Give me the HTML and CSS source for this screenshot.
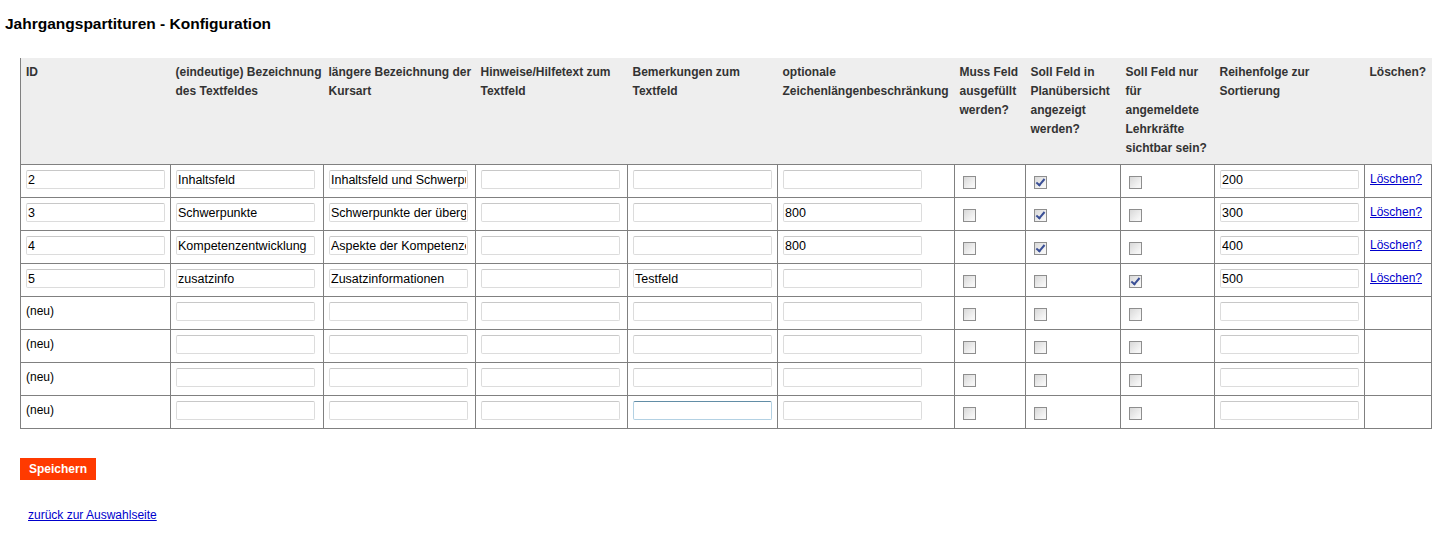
FILE: index.html
```html
<!DOCTYPE html>
<html lang="de">
<head>
    <meta charset="UTF-8">
    <title>Jahrgangspartituren - Konfiguration</title>
    <link rel="stylesheet" href="styles.css">
</head>
<body>

    <h1 class="page-title">Jahrgangspartituren - Konfiguration</h1>

    <!-- Konfiguration der Textfelder -->
    <form class="config" onsubmit="return false">
        <table class="fields">
            <colgroup>
                <col class="c-id">
                <col class="c-name">
                <col class="c-long">
                <col class="c-hint">
                <col class="c-note">
                <col class="c-len">
                <col class="c-must">
                <col class="c-plan">
                <col class="c-auth">
                <col class="c-order">
                <col class="c-del">
            </colgroup>
            <thead>
                <tr>
                    <th>ID</th>
                    <th>(eindeutige) Bezeichnung des Textfeldes</th>
                    <th>längere Bezeichnung der Kursart</th>
                    <th>Hinweise/Hilfetext zum Textfeld</th>
                    <th>Bemerkungen zum Textfeld</th>
                    <th>optionale Zeichenlängenbeschränkung</th>
                    <th>Muss Feld ausgefüllt werden?</th>
                    <th>Soll Feld in Planübersicht angezeigt werden?</th>
                    <th>Soll Feld nur für angemeldete Lehrkräfte sichtbar sein?</th>
                    <th>Reihenfolge zur Sortierung</th>
                    <th>Löschen?</th>
                </tr>
            </thead>
            <tbody>
                <tr>
                    <td><input type="text" value="2"></td>
                    <td><input type="text" value="Inhaltsfeld"></td>
                    <td><input type="text" value="Inhaltsfeld und Schwerpunkte"></td>
                    <td><input type="text"></td>
                    <td><input type="text"></td>
                    <td><input type="text"></td>
                    <td><input type="checkbox"></td>
                    <td><input type="checkbox" checked></td>
                    <td><input type="checkbox"></td>
                    <td><input type="text" value="200"></td>
                    <td><a href="#">Löschen?</a></td>
                </tr>
                <tr>
                    <td><input type="text" value="3"></td>
                    <td><input type="text" value="Schwerpunkte"></td>
                    <td><input type="text" value="Schwerpunkte der übergeordneten Kompetenzerwartungen"></td>
                    <td><input type="text"></td>
                    <td><input type="text"></td>
                    <td><input type="text" value="800"></td>
                    <td><input type="checkbox"></td>
                    <td><input type="checkbox" checked></td>
                    <td><input type="checkbox"></td>
                    <td><input type="text" value="300"></td>
                    <td><a href="#">Löschen?</a></td>
                </tr>
                <tr>
                    <td><input type="text" value="4"></td>
                    <td><input type="text" value="Kompetenzentwicklung"></td>
                    <td><input type="text" value="Aspekte der Kompetenzentwicklung"></td>
                    <td><input type="text"></td>
                    <td><input type="text"></td>
                    <td><input type="text" value="800"></td>
                    <td><input type="checkbox"></td>
                    <td><input type="checkbox" checked></td>
                    <td><input type="checkbox"></td>
                    <td><input type="text" value="400"></td>
                    <td><a href="#">Löschen?</a></td>
                </tr>
                <tr>
                    <td><input type="text" value="5"></td>
                    <td><input type="text" value="zusatzinfo"></td>
                    <td><input type="text" value="Zusatzinformationen"></td>
                    <td><input type="text"></td>
                    <td><input type="text" value="Testfeld"></td>
                    <td><input type="text"></td>
                    <td><input type="checkbox"></td>
                    <td><input type="checkbox"></td>
                    <td><input type="checkbox" checked></td>
                    <td><input type="text" value="500"></td>
                    <td><a href="#">Löschen?</a></td>
                </tr>
                <tr>
                    <td>(neu)</td>
                    <td><input type="text"></td>
                    <td><input type="text"></td>
                    <td><input type="text"></td>
                    <td><input type="text"></td>
                    <td><input type="text"></td>
                    <td><input type="checkbox"></td>
                    <td><input type="checkbox"></td>
                    <td><input type="checkbox"></td>
                    <td><input type="text"></td>
                    <td></td>
                </tr>
                <tr>
                    <td>(neu)</td>
                    <td><input type="text"></td>
                    <td><input type="text"></td>
                    <td><input type="text"></td>
                    <td><input type="text"></td>
                    <td><input type="text"></td>
                    <td><input type="checkbox"></td>
                    <td><input type="checkbox"></td>
                    <td><input type="checkbox"></td>
                    <td><input type="text"></td>
                    <td></td>
                </tr>
                <tr>
                    <td>(neu)</td>
                    <td><input type="text"></td>
                    <td><input type="text"></td>
                    <td><input type="text"></td>
                    <td><input type="text"></td>
                    <td><input type="text"></td>
                    <td><input type="checkbox"></td>
                    <td><input type="checkbox"></td>
                    <td><input type="checkbox"></td>
                    <td><input type="text"></td>
                    <td></td>
                </tr>
                <tr>
                    <td>(neu)</td>
                    <td><input type="text"></td>
                    <td><input type="text"></td>
                    <td><input type="text"></td>
                    <td><input type="text" class="hovered"></td>
                    <td><input type="text"></td>
                    <td><input type="checkbox"></td>
                    <td><input type="checkbox"></td>
                    <td><input type="checkbox"></td>
                    <td><input type="text"></td>
                    <td></td>
                </tr>
            </tbody>
        </table>

        <button type="submit" class="btn-save">Speichern</button>
    </form>

    <a href="#" class="back-link">zurück zur Auswahlseite</a>

</body>
</html>
```

FILE: styles.css
```css
/* General Styles */
body {
    margin: 0;
    padding: 0;
    font-family: "Liberation Sans", Arial, sans-serif;
    font-size: 12px;
    color: #000;
    background: #fff;
}

.page-title {
    margin: 0;
    padding: 15px 5px 0 5px;
    height: 58px;
    box-sizing: border-box;
    font-size: 15.5px;
    font-weight: bold;
    line-height: 18px;
}

.config {
    padding-left: 20px;
}

/* Tabelle */
.fields {
    border-collapse: collapse;
    table-layout: fixed;
    width: 1411px;
}

.c-id    { width: 150px; }
.c-name  { width: 153px; }
.c-long  { width: 152px; }
.c-hint  { width: 152px; }
.c-note  { width: 150px; }
.c-len   { width: 177px; }
.c-must  { width: 71px; }
.c-plan  { width: 95px; }
.c-auth  { width: 94px; }
.c-order { width: 150px; }
.c-del   { width: 67px; }

.fields th {
    background: #eeeeee;
    color: #333;
    font-weight: bold;
    font-size: 12px;
    line-height: 19px;
    text-align: left;
    vertical-align: top;
    padding: 5px 0 6px 5px;
    border-bottom: 1px solid #808080;
}

.fields th:first-child {
    border-left: 1px solid #808080;
}

.fields td {
    border: 1px solid #808080;
    height: 33px;
    box-sizing: border-box;
    padding: 5px 0 0 5px;
    vertical-align: top;
    line-height: 19px;
    white-space: nowrap;
    overflow: hidden;
}

.fields input[type="text"] {
    display: block;
    width: 139px;
    height: 19px;
    box-sizing: border-box;
    margin: 0;
    padding: 0 1px;
    border: 1px solid #dcdcdc;
    border-top-color: #c8c8c8;
    border-radius: 2px;
    font-family: "Liberation Sans", Tahoma, sans-serif;
    font-size: 12.5px;
    color: #000;
    background: #fff;
    outline: none;
}

.fields input.hovered {
    border-color: #b3d1e3;
    border-top-color: #628da6;
}

.fields input[type="checkbox"] {
    -webkit-appearance: none;
    appearance: none;
    position: relative;
    display: block;
    width: 13px;
    height: 13px;
    margin: 6px 0 0 3px;
    border: 1px solid #8e8e8e;
    background: linear-gradient(135deg, #d8d8d8, #f6f6f6 80%);
    box-sizing: border-box;
}

.fields input[type="checkbox"]:checked::after {
    content: "";
    position: absolute;
    left: 3px;
    top: 0px;
    width: 3px;
    height: 7px;
    border: solid #3a4f96;
    border-width: 0 2px 2px 0;
    transform: rotate(40deg);
}

.fields a {
    color: #0000cc;
    font-size: 12px;
}

/* Buttons und Links */
.btn-save {
    display: block;
    margin-top: 29px;
    padding: 0 9px;
    height: 22px;
    border: none;
    background: #ff3a00;
    color: #fff;
    font-family: "Liberation Sans", Arial, sans-serif;
    font-size: 12px;
    font-weight: bold;
    cursor: pointer;
}

.back-link {
    display: inline-block;
    margin: 28px 0 0 28px;
    color: #0000cc;
    font-size: 12px;
}
```
